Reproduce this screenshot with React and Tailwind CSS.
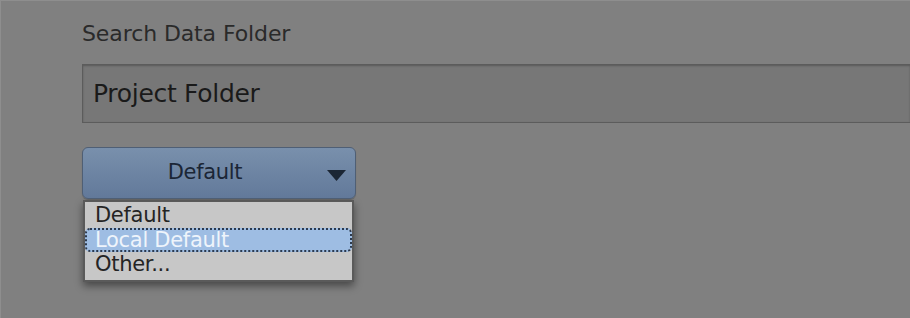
export default function App() {
  const options = ['Default', 'Local Default', 'Other...']
  const selected = 1

  return (
    <div
      className="w-[910px] h-[318px] bg-[#808080] border-l border-t border-[#8e8e8e] overflow-hidden"
      style={{ fontFamily: '"DejaVu Sans", Verdana, sans-serif' }}
    >
      <div className="pl-[81px] pt-[20px]">
        <div className="text-[22px] leading-[26px] text-[#2a2a2a] tracking-[-0.1px]">Search Data Folder</div>

        <div className="mt-[17px] h-[59px] border border-[#5c5c5c] border-r-0 bg-[#777777] shadow-[inset_0_1px_2px_rgba(0,0,0,0.25)] flex items-center pl-[10px]">
          <span className="text-[25px] text-[#1a1a1a] tracking-[-0.3px]">Project Folder</span>
        </div>

        <div className="mt-[24px] w-[274px] relative">
          <button className="w-full h-[52px] rounded-[6px] border border-[#4f5f75] bg-gradient-to-b from-[#7990ac] to-[#62799a] flex items-center justify-center pr-[28px] relative shadow-[0_1px_1px_rgba(0,0,0,0.2)]">
            <span className="text-[21px] text-[#1b2636] tracking-[-0.3px]">Default</span>
            <svg className="absolute right-[9px] top-[22px]" width="19" height="11" viewBox="0 0 19 11">
              <path d="M0 0 H19 L9.5 11 Z" fill="#1b2634" />
            </svg>
          </button>

          <div className="mt-[1px] ml-[1px] w-[271px] bg-[#c7c7c7] border-2 border-[#5a5a5a] shadow-[0_4px_8px_rgba(0,0,0,0.45)] pt-[1px] pb-[3px]">
            {options.map((opt, i) => (
              <div
                key={opt}
                className={
                  i === selected
                    ? 'h-[24px] flex items-center pl-[8px] rounded-[5px] bg-[#9ebde3] border-2 border-dotted border-[#2c3a4e] text-[#eef4fb]'
                    : 'h-[25px] flex items-center pl-[10px] text-[#242424]'
                }
              >
                <span className="text-[21px] leading-none tracking-[-0.3px]">{opt}</span>
              </div>
            ))}
          </div>
        </div>
      </div>
    </div>
  )
}
